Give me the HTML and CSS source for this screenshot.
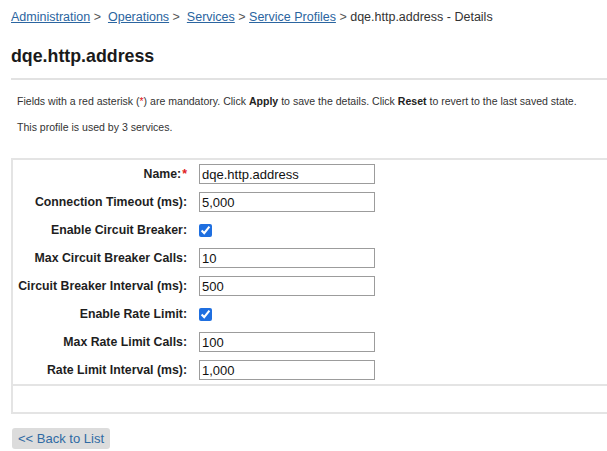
FILE: index.html
```html
<!DOCTYPE html>
<html>
<head>
<meta charset="utf-8">
<link rel="stylesheet" href="styles.css">
</head>
<body>
<div class="page">
  <nav class="crumbs">
    <a href="#">Administration</a> <span class="sep">&gt;&nbsp;</span>
    <a href="#">Operations</a> <span class="sep">&gt;&nbsp;</span>
    <a href="#">Services</a> <span class="sep">&gt;</span>
    <a href="#">Service Profiles</a> <span class="sep">&gt;</span>
    <span class="current">dqe.http.address - Details</span>
  </nav>
  <h1 class="title">dqe.http.address</h1>
  <div class="intro">
    <p>Fields with a red asterisk (<span class="req">*</span>) are mandatory. Click <b>Apply</b> to save the details. Click <b>Reset</b> to revert to the last saved state.</p>
    <p>This profile is used by 3 services.</p>
  </div>
  <div class="panel">
    <div class="form">
      <label class="lbl">Name:<span class="req">*</span></label>
      <div class="field"><input class="txt" type="text" value="dqe.http.address"></div>
      <label class="lbl">Connection Timeout (ms):</label>
      <div class="field"><input class="txt" type="text" value="5,000"></div>
      <label class="lbl">Enable Circuit Breaker:</label>
      <div class="field"><input class="chk" type="checkbox" checked></div>
      <label class="lbl">Max Circuit Breaker Calls:</label>
      <div class="field"><input class="txt" type="text" value="10"></div>
      <label class="lbl">Circuit Breaker Interval (ms):</label>
      <div class="field"><input class="txt" type="text" value="500"></div>
      <label class="lbl">Enable Rate Limit:</label>
      <div class="field"><input class="chk" type="checkbox" checked></div>
      <label class="lbl">Max Rate Limit Calls:</label>
      <div class="field"><input class="txt" type="text" value="100"></div>
      <label class="lbl">Rate Limit Interval (ms):</label>
      <div class="field"><input class="txt" type="text" value="1,000"></div>
    </div>
    <div class="panel-foot"></div>
  </div>
  <button class="back" type="button">&lt;&lt; Back to List</button>
</div>
</body>
</html>
```
FILE: styles.css
```css
html, body {
  margin: 0;
  padding: 0;
  overflow: hidden;
  background: #fff;
}
body {
  font-family: "Liberation Sans", Arial, sans-serif;
  color: #222;
}
.page {
  padding: 9px 0 0 11px;
  width: 640px;
}
.crumbs {
  font-size: 12.5px;
  line-height: 16px;
  color: #444;
  white-space: nowrap;
}
.crumbs a {
  color: #2b65a0;
  text-decoration: underline;
}
.crumbs .sep {
  color: #555;
}
.crumbs .current {
  color: #333;
}
.title {
  margin: 20px 0 0 0;
  font-size: 17.8px;
  line-height: 22px;
  font-weight: bold;
  color: #1a1a1a;
  padding-bottom: 11px;
  border-bottom: 2px solid #e2e2e2;
}
.intro {
  padding-left: 6px;
  margin-top: 14px;
  font-size: 10.55px;
  line-height: 14px;
  color: #333;
}
.intro p {
  margin: 0 0 12px 0;
  white-space: nowrap;
}
.intro b {
  color: #222;
}
.req {
  color: #e0201c;
}
.panel {
  margin-top: 24px;
  border: 2px solid #e4e4e4;
  border-right: none;
}
.form {
  display: grid;
  grid-template-columns: 179px 1fr;
  grid-auto-rows: 28px;
  column-gap: 7px;
  border-bottom: 2px solid #e4e4e4;
}
.lbl {
  display: flex;
  align-items: center;
  justify-content: flex-end;
  padding-right: 5px;
  font-size: 12.3px;
  font-weight: bold;
  color: #1e1e1e;
  white-space: nowrap;
}
.lbl .req {
  font-weight: bold;
  margin-left: 1px;
}
.field {
  display: flex;
  align-items: center;
}
.txt {
  box-sizing: border-box;
  width: 176px;
  height: 20px;
  margin: 0;
  padding: 0 2px;
  border: 1px solid #9c9c9c;
  border-radius: 0;
  font-family: "Liberation Sans", Arial, sans-serif;
  font-size: 13px;
  color: #111;
  background: #fff;
  outline: none;
}
.chk {
  width: 13px;
  height: 13px;
  margin: 0;
  accent-color: #1f6fe0;
}
.panel-foot {
  height: 26px;
}
.back {
  display: block;
  margin-top: 14px;
  margin-left: 1px;
  height: 21px;
  padding: 0 6px;
  border: none;
  border-radius: 3px;
  background: #dcdcdc;
  color: #2f6aa3;
  font-family: "Liberation Sans", Arial, sans-serif;
  font-size: 13px;
  line-height: 21px;
}
```
